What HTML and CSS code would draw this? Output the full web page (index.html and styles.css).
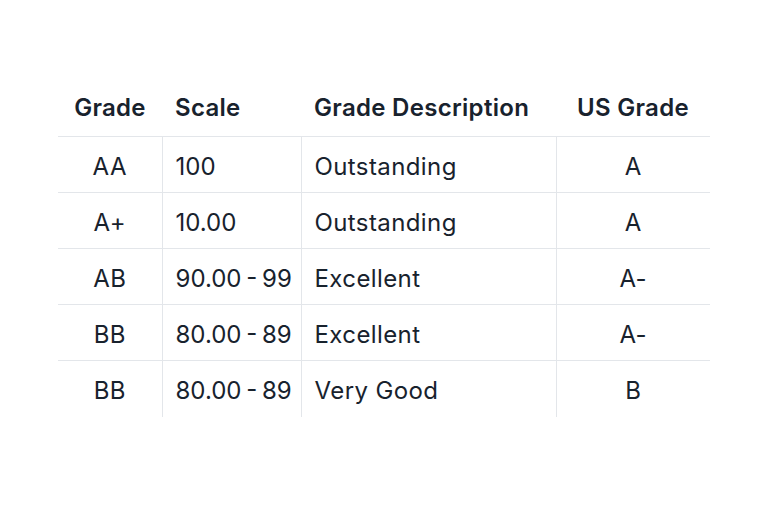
FILE: index.html
```html
<!DOCTYPE html>
<html><head>
<meta charset="utf-8">
<meta name="viewport" content="width=device-width, initial-scale=1.0">
<title>Grade Scale</title>
<link rel="stylesheet" href="styles.css">
</head>
<body>
<div class="wrap">
<table class="grades">
  <colgroup>
    <col class="c1"><col class="c2"><col class="c3"><col class="c4">
  </colgroup>
  <thead>
    <tr><th class="mid">Grade</th><th>Scale</th><th>Grade Description</th><th class="mid">US Grade</th></tr>
  </thead>
  <tbody>
    <tr><td class="mid">AA</td><td class="num">100</td><td>Outstanding</td><td class="mid">A</td></tr>
    <tr><td class="mid">A+</td><td class="num">10.00</td><td>Outstanding</td><td class="mid">A</td></tr>
    <tr><td class="mid">AB</td><td class="num">90.00 - 99</td><td>Excellent</td><td class="mid">A-</td></tr>
    <tr><td class="mid">BB</td><td class="num">80.00 - 89</td><td>Excellent</td><td class="mid">A-</td></tr>
    <tr><td class="mid">BB</td><td class="num">80.00 - 89</td><td>Very Good</td><td class="mid">B</td></tr>
  </tbody>
</table>
</div>
</body>
</html>
```

FILE: styles.css
```css
body {
  margin: 0;
  background: #ffffff;
  font-family: Inter, Lato, sans-serif;
  color: #18222d;
}
.wrap { padding: 78px 0 0 58px; }

.grades {
  border-collapse: collapse;
  table-layout: fixed;
  width: 652px;
  font-size: 24px;
  letter-spacing: 0.4px;
}
.c1 { width: 104px; }
.c2 { width: 139px; }
.c3 { width: 255px; }
.c4 { width: 154px; }

.grades th, .grades td {
  text-align: left;
  padding: 0 0 0 13px;
  white-space: nowrap;
}
.grades th {
  height: 58px;
  font-weight: 600;
  letter-spacing: 0.3px;
  border-bottom: 1px solid #e3e6ea;
}
.grades td {
  box-sizing: border-box;
  height: 56px;
  padding-top: 3px;
  font-weight: 400;
  border-top: 1px solid #e3e6ea;
  border-left: 1px solid #e3e6ea;
}
.grades td:first-child { border-left: none; }
.grades tr:first-child td { border-top: none; }
.grades td.mid { padding-left: 0; }
.grades .mid { text-align: center; padding-left: 0; }
.grades .num { letter-spacing: 0; word-spacing: -2px; }
```
